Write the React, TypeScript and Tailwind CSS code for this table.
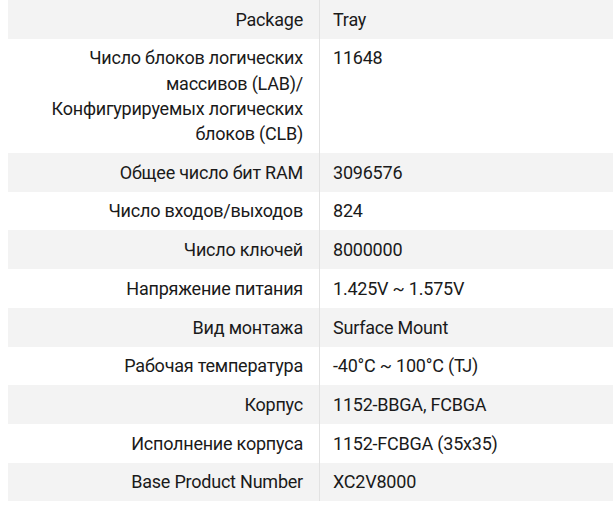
import React from "react";

const rows: [React.ReactNode, string][] = [
  ["Package", "Tray"],
  [
    <>
      Число блоков логических
      <br />
      массивов (LAB)/
      <br />
      Конфигурируемых логических
      <br />
      блоков (CLB)
    </>,
    "11648",
  ],
  ["Общее число бит RAM", "3096576"],
  ["Число входов/выходов", "824"],
  ["Число ключей", "8000000"],
  ["Напряжение питания", "1.425V ~ 1.575V"],
  ["Вид монтажа", "Surface Mount"],
  ["Рабочая температура", "-40°C ~ 100°C (TJ)"],
  ["Корпус", "1152-BBGA, FCBGA"],
  ["Исполнение корпуса", "1152-FCBGA (35x35)"],
  ["Base Product Number", "XC2V8000"],
];

export default function App() {
  return (
    <div
      className="w-[613px] h-[513px] overflow-hidden bg-white pl-2 text-[18px] leading-[25.2px] tracking-[-0.22px] text-[#1a1a1a]"
      style={{ fontFamily: "Roboto, 'Noto Sans', sans-serif" }}
    >
      <div className="flex flex-col w-[605px]">
        {rows.map(([label, value], i) => (
          <div
            key={i}
            className={`flex ${i % 2 === 0 ? "bg-[#f3f3f3]" : "bg-white"}`}
          >
            <div className="w-[312px] shrink-0 border-r border-[#e2e2e2] py-[6.75px] pr-4 text-right">
              {label}
            </div>
            <div className="flex-1 py-[6.75px] pl-[13px]">{value}</div>
          </div>
        ))}
      </div>
    </div>
  );
}
